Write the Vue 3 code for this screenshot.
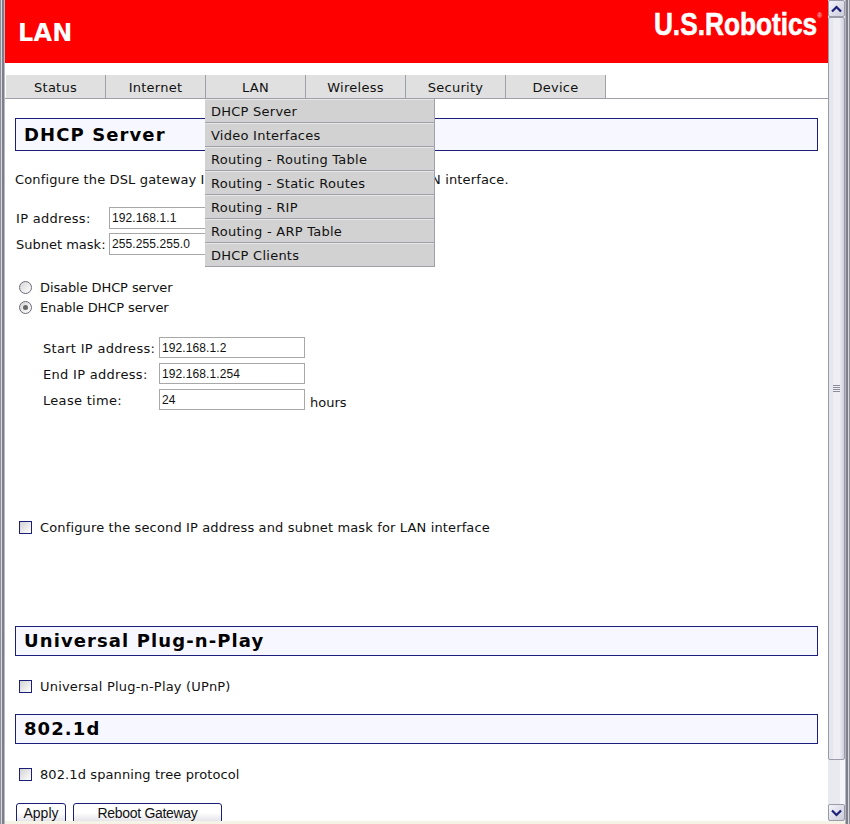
<template>
  <div class="window">
    <div class="frame-left"></div>
    <div class="view">
      <main class="page">
        <header class="banner">
          <h1>LAN</h1>
          <div class="logo">U.S.Robotics<sup>®</sup></div>
        </header>

        <nav class="tabs">
          <div v-for="t in tabs" :key="t" class="tab">{{ t }}</div>
        </nav>
        <div class="menu">
          <div v-for="m in menu" :key="m" class="menu-item">{{ m }}</div>
        </div>

        <div class="content">
          <h2 class="section first">DHCP Server</h2>
          <p class="intro">Configure the DSL gateway IP address and subnet mask for LAN interface.</p>

          <div class="fields">
            <label>IP address:</label>
            <input class="inp" value="192.168.1.1" readonly />
            <label class="tight">Subnet mask:</label>
            <input class="inp" value="255.255.255.0" readonly />
          </div>

          <div class="radios">
            <div class="opt"><span class="radio"></span>Disable DHCP server</div>
            <div class="opt"><span class="radio on"></span>Enable DHCP server</div>
          </div>

          <div class="fields dhcp">
            <label>Start IP address:</label>
            <input class="inp" value="192.168.1.2" readonly />
            <span></span>
            <label>End IP address:</label>
            <input class="inp" value="192.168.1.254" readonly />
            <span></span>
            <label>Lease time:</label>
            <input class="inp" value="24" readonly />
            <span class="unit">hours</span>
          </div>

          <div class="opt second"><span class="check"></span>Configure the second IP address and subnet mask for LAN interface</div>

          <h2 class="section upnp">Universal Plug-n-Play</h2>
          <div class="opt upnp-opt"><span class="check"></span>Universal Plug-n-Play (UPnP)</div>

          <h2 class="section stp">802.1d</h2>
          <div class="opt stp-opt"><span class="check"></span>802.1d spanning tree protocol</div>

          <div class="actions">
            <button class="btn apply">Apply</button>
            <button class="btn reboot">Reboot Gateway</button>
          </div>
        </div>
      </main>

      <aside class="scrollbar">
        <div class="sb-btn">
          <svg width="11" height="8" viewBox="0 0 11 8"><path d="M1 6.5 5.5 2 10 6.5" fill="none" stroke="#1b1f78" stroke-width="2.2"/></svg>
        </div>
        <div class="sb-thumb">
          <div class="grip"><i></i><i></i><i></i><i></i></div>
        </div>
        <div class="sb-track"></div>
        <div class="sb-btn">
          <svg width="11" height="8" viewBox="0 0 11 8"><path d="M1 1.5 5.5 6 10 1.5" fill="none" stroke="#1b1f78" stroke-width="2.2"/></svg>
        </div>
      </aside>
    </div>
    <div class="frame-right"></div>
  </div>
</template>

<script setup>
const tabs = ['Status', 'Internet', 'LAN', 'Wireless', 'Security', 'Device']
const menu = [
  'DHCP Server',
  'Video Interfaces',
  'Routing - Routing Table',
  'Routing - Static Routes',
  'Routing - RIP',
  'Routing - ARP Table',
  'DHCP Clients',
]
</script>

<style>
html, body { margin: 0; overflow: hidden; background: #fff; }
</style>

<style scoped>
.window {
  display: flex;
  width: 850px;
  height: 824px;
  overflow: hidden;
  font-family: "DejaVu Sans", Verdana, sans-serif;
  font-size: 13px;
  color: #111;
  letter-spacing: 0.14px;
}
.frame-left {
  width: 5px;
  flex: none;
  background: linear-gradient(90deg, #8f8f9c 0 1px, #d8d8de 1px 2px, #7f7f8c 2px 4px, #b8b8c4 4px 5px);
}
.frame-right {
  width: 5px;
  flex: none;
  background: linear-gradient(90deg, #b8b8c4 0 1px, #7f7f8c 1px 3px, #d8d8de 3px 4px, #8f8f9c 4px 5px);
}
.view {
  flex: 1;
  display: flex;
  height: 821px;
  border-bottom: 3px solid #f4f3e6;
  overflow: hidden;
}
.page {
  position: relative;
  width: 823px;
  flex: none;
  background: #fff;
  overflow: hidden;
}
.banner {
  height: 63px;
  background: #f00;
  display: flex;
  justify-content: space-between;
  padding: 0 6px 0 13px;
  color: #fff;
}
.banner h1 {
  margin: 19px 0 0;
  font-size: 24px;
  line-height: 28px;
  font-weight: 700;
  letter-spacing: 0.2px;
}
.logo {
  font-family: "Liberation Sans", Arial, sans-serif;
  font-weight: 700;
  font-size: 32px;
  line-height: 32px;
  margin-top: 8px;
  letter-spacing: 0;
  white-space: nowrap;
  transform: scaleX(0.82);
  transform-origin: right center;
  -webkit-text-stroke: 0.6px #fff;
}
.logo sup {
  font-size: 8px;
  color: #ffc0c0;
  vertical-align: 17px;
  line-height: 0;
  -webkit-text-stroke: 0;
}
.tabs {
  display: flex;
  height: 23px;
  margin-top: 12px;
  padding-left: 1px;
  border-bottom: 1px solid #a0a0aa;
  letter-spacing: 0.25px;
}
.tab {
  width: 99px;
  border-right: 1px solid #a0a0aa;
  background: #e0e0e0;
  text-align: center;
  line-height: 25px;
}
.menu {
  position: absolute;
  left: 200px;
  top: 99px;
  width: 230px;
  z-index: 2;
  background: #d2d2d2;
  border-right: 1px solid #a0a0aa;
  box-sizing: border-box;
  letter-spacing: 0.25px;
}
.menu-item {
  height: 24px;
  box-sizing: border-box;
  padding-left: 6px;
  line-height: 23px;
  background: #d2d2d2;
  border-bottom: 1px solid #a0a0aa;
  border-top: 1px solid #e6e6e6;
  white-space: nowrap;
}
.content {
  padding: 0 10px;
}
.section {
  margin: 0;
  height: 33px;
  box-sizing: border-box;
  border: 1px solid #1b1f78;
  background: #f7f8ff;
  padding-left: 8px;
  font-size: 18px;
  font-weight: 700;
  line-height: 32px;
  letter-spacing: 1.1px;
  color: #000;
}
.section.first { margin-top: 19px; }
.intro {
  margin: 21px 0 0;
  line-height: 16px;
}
.fields {
  display: grid;
  grid-template-columns: 93px 146px;
  row-gap: 4px;
  align-items: center;
  margin-top: 19px;
  margin-left: 1px;
  letter-spacing: 0.3px;
  white-space: nowrap;
}
.tight { letter-spacing: 0; }
.inp {
  box-sizing: border-box;
  width: 146px;
  height: 22px;
  padding: 0 2px;
  border: 1px solid #a8a8a8;
  background: #fff;
  font-family: "Liberation Sans", Arial, sans-serif;
  font-size: 12px;
  letter-spacing: 0.1px;
  color: #111;
  outline: none;
}
.radios {
  margin-top: 22px;
  margin-left: 4px;
  letter-spacing: -0.1px;
}
.opt {
  display: flex;
  align-items: center;
  gap: 8px;
  height: 20px;
  white-space: nowrap;
}
.radio {
  position: relative;
  width: 13px;
  height: 13px;
  box-sizing: border-box;
  border: 1px solid #6b6b78;
  border-radius: 50%;
  background: linear-gradient(135deg, #d6d6d6, #fff);
}
.radio.on::after {
  content: "";
  position: absolute;
  left: 3px;
  top: 3px;
  width: 5px;
  height: 5px;
  border-radius: 50%;
  background: #666;
}
.check {
  width: 13px;
  height: 13px;
  box-sizing: border-box;
  border: 1px solid #1b1f78;
  background: linear-gradient(135deg, #d2d2d2, #fff);
}
.dhcp {
  grid-template-columns: 116px 146px auto;
  margin-top: 20px;
  margin-left: 28px;
  row-gap: 5px;
}
.dhcp label { padding-top: 2px; }
.dhcp .inp { height: 21px; }
.unit { margin-left: 5px; padding-top: 6px; letter-spacing: 0; }
.second { margin-top: 107px; margin-left: 4px; }
.section.upnp { margin-top: 89px; height: 30px; line-height: 28px; }
.upnp-opt { margin-top: 20px; margin-left: 4px; letter-spacing: 0.2px; }
.section.stp { margin-top: 18px; height: 30px; line-height: 28px; }
.stp-opt { margin-top: 20px; margin-left: 4px; letter-spacing: 0.1px; }
.actions {
  display: flex;
  gap: 7px;
  margin-top: 19px;
  margin-left: 1px;
}
.btn {
  height: 24px;
  padding: 0 0 4px;
  border: 1px solid #1b1f78;
  border-radius: 3px;
  background: linear-gradient(#fff 0 40%, #d4d4de);
  font-family: "Liberation Sans", Arial, sans-serif;
  font-size: 14px;
  color: #111;
}
.apply { width: 50px; }
.reboot { width: 149px; letter-spacing: -0.3px; }
.scrollbar {
  width: 17px;
  flex: none;
  display: flex;
  flex-direction: column;
  background: linear-gradient(90deg, #e9e9f0 0 12px, #f5f5fb 12px);
}
.sb-btn {
  height: 17px;
  flex: none;
  box-sizing: border-box;
  display: flex;
  align-items: center;
  justify-content: center;
  border: 1px solid #9a9aa8;
  border-radius: 2px;
  background: linear-gradient(135deg, #f4f4fa, #ccccdc);
}
.sb-thumb {
  height: 743px;
  flex: none;
  box-sizing: border-box;
  display: flex;
  align-items: center;
  justify-content: center;
  border: 1px solid #9a9aa8;
  border-radius: 2px;
  background: linear-gradient(90deg, #e6e6ee 0 30%, #eeeef4 30% 70%, #cfcfde);
}
.grip i {
  display: block;
  width: 7px;
  height: 1px;
  margin-bottom: 1px;
  background: #8c8c9c;
}
.sb-track { flex: 1; }
</style>
